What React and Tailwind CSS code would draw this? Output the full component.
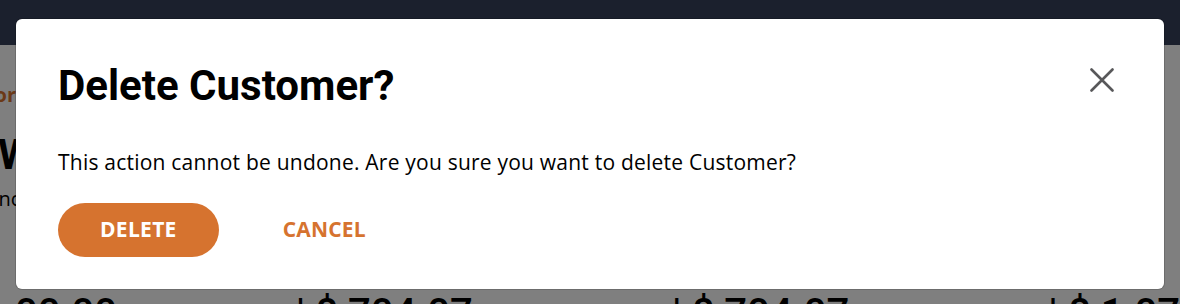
const totals = [
  { label: "00.00", className: "w-[281px]" },
  { label: "| $ 704.07", className: "w-[377px]" },
  { label: "| $ 704.07", className: "w-[377px]" },
  { label: "| $ 1.07", className: "flex-1" },
];

const CloseIcon = () => (
  <svg width="24" height="24" viewBox="0 0 24 24" fill="none">
    <path
      d="M1.5 1.5 L22.5 22.5 M22.5 1.5 L1.5 22.5"
      stroke="currentColor"
      strokeWidth="2.6"
      strokeLinecap="round"
    />
  </svg>
);

const App = () => {
  return (
    <div className="relative h-[304px] w-[1180px] overflow-hidden bg-white font-['Open_Sans',sans-serif]">
      {/* page behind the dialog */}
      <div className="h-[45px] bg-[#36405a]" />
      <div className="flex flex-col">
        <div className="mt-[38px] flex w-[16px] justify-end whitespace-nowrap text-[20px] font-bold leading-6 text-[#d6732f]">
          Vendor
        </div>
        <h1 className="mt-[26px] -ml-[2px] font-['Roboto',sans-serif] text-[42px] font-bold leading-[44px] text-black">
          W
        </h1>
        <p className="mt-[10px] -ml-[7px] text-[20px] leading-6 text-black">
          Inc
        </p>
        <div className="mt-[81px] flex whitespace-nowrap pl-[15px] font-['Roboto',sans-serif] text-[40px] font-medium leading-[44px] text-black">
          {totals.map((item, index) => (
            <div key={index} className={item.className}>
              {item.label}
            </div>
          ))}
        </div>
      </div>

      <div className="absolute inset-0 bg-black/50" />

      {/* dialog */}
      <div className="absolute left-[16px] top-[19px] w-[1148px] rounded-md bg-white px-[42px] pb-[32px] pt-[45px] shadow-[0_0_0_1px_rgba(0,0,0,0.15)]">
        <div className="flex items-start justify-between">
          <h2 className="font-['Roboto',sans-serif] text-[42px] font-bold leading-[44px] text-black">
            Delete Customer?
          </h2>
          <button
            type="button"
            className="mr-[8px] mt-[4px] cursor-pointer text-[#58585a]"
          >
            <CloseIcon />
          </button>
        </div>

        <p className="mt-[40px] text-[21px] leading-[28px] tracking-[0.22px] text-black">
          This action cannot be undone. Are you sure you want to delete
          Customer?
        </p>

        <div className="mt-[27px] flex items-center gap-[22px]">
          <button
            type="button"
            className="h-[54px] cursor-pointer rounded-full bg-[#d6732f] px-[42px] text-[21px] font-bold uppercase tracking-[0.3px] text-white"
          >
            Delete
          </button>
          <button
            type="button"
            className="h-[54px] cursor-pointer px-[42px] text-[21px] font-bold uppercase tracking-[0.2px] text-[#d6732f]"
          >
            Cancel
          </button>
        </div>
      </div>
    </div>
  );
};

export default App;
